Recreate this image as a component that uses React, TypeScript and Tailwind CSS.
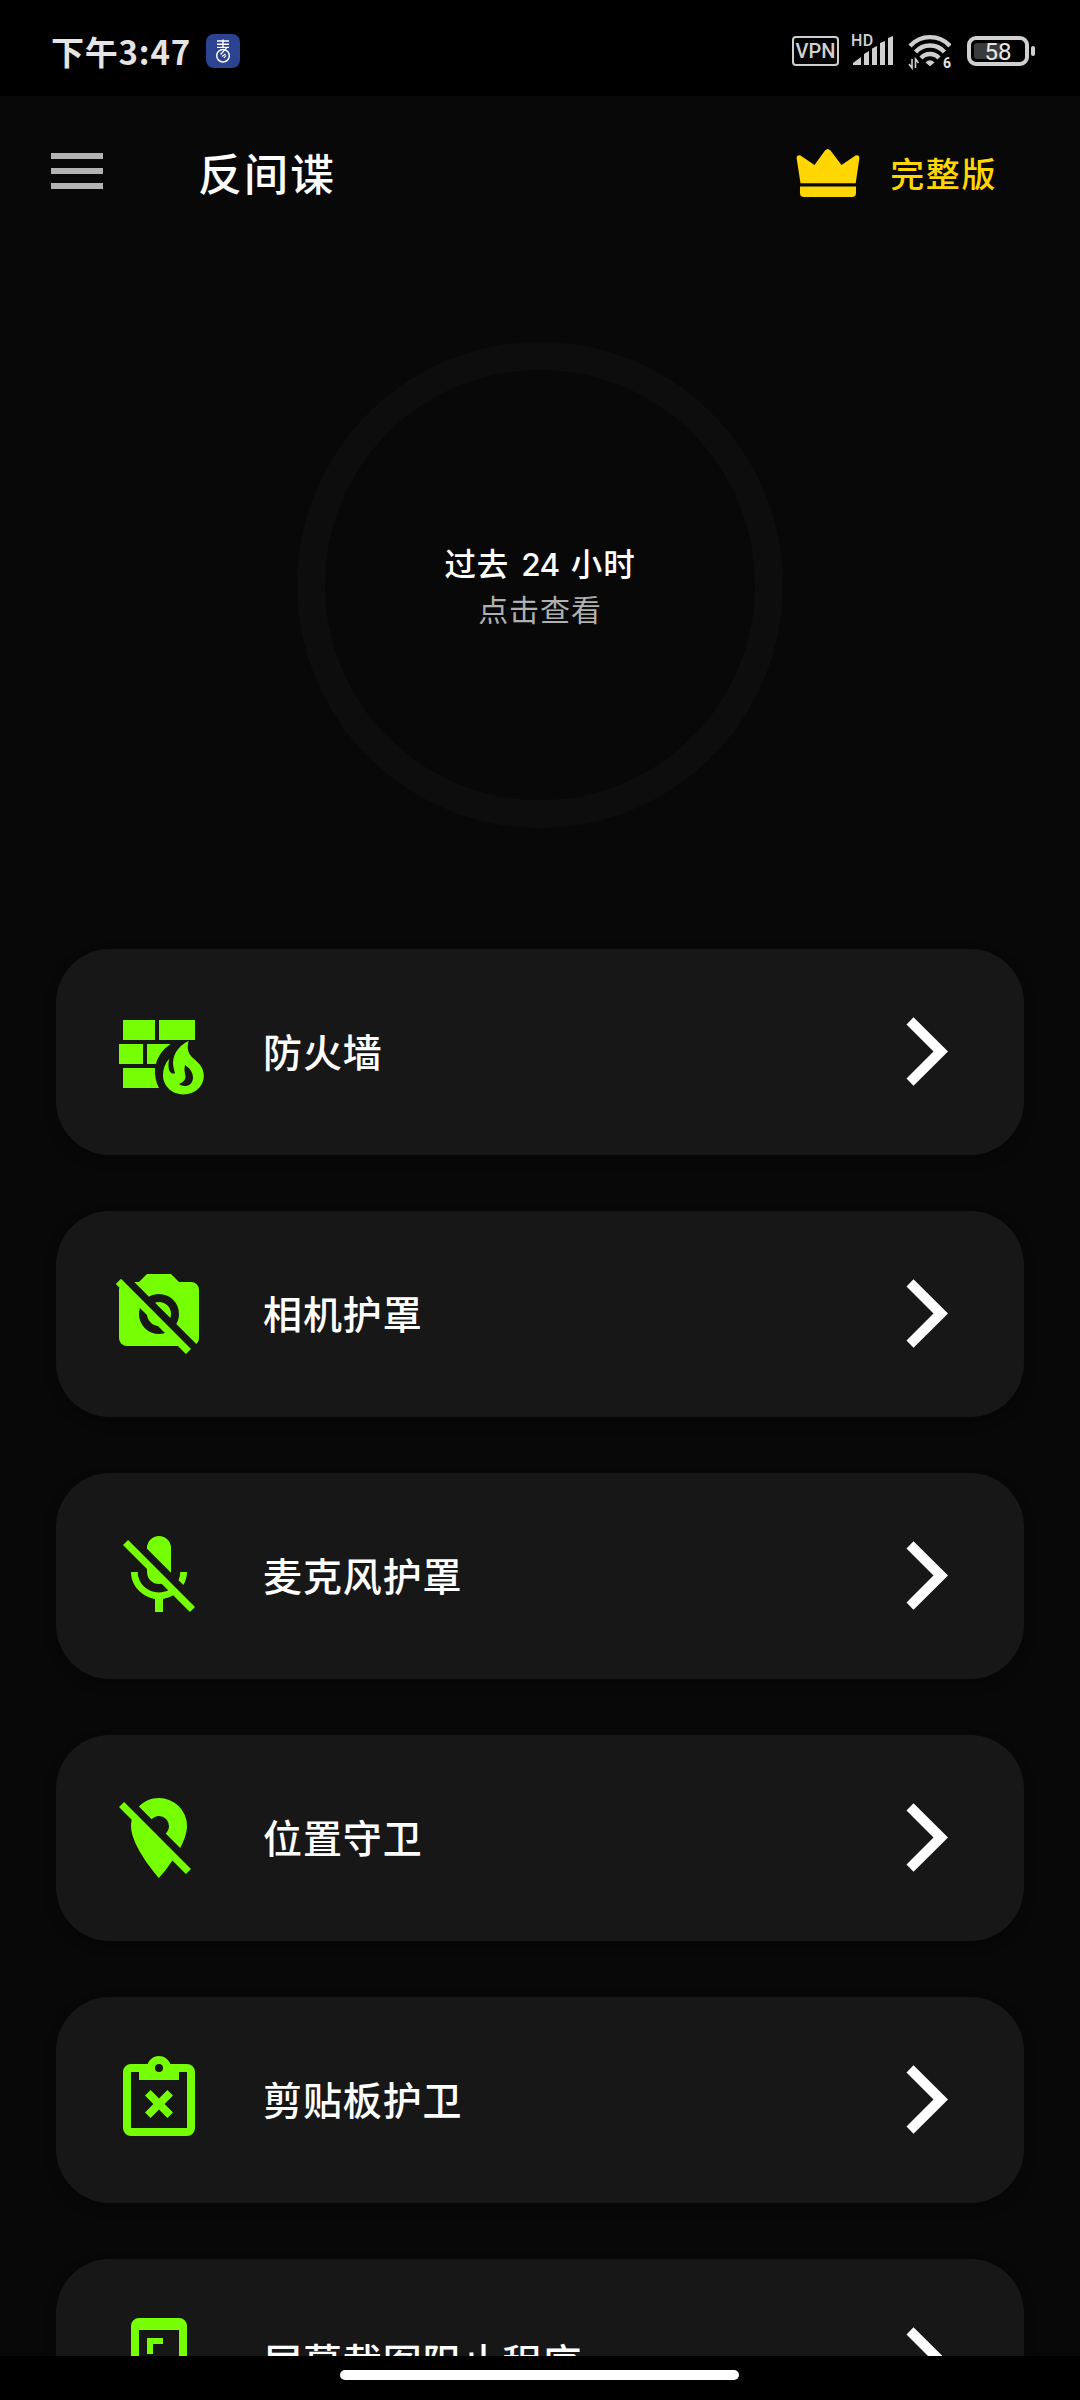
import type { ReactNode } from "react";

type Guard = {
  label: string;
  icon: ReactNode;
};

const guards: Guard[] = [
  {
    label: "防火墙",
    icon: (
      <>
        <path d="M3,4H11V9H3ZM12,4H21V9H12ZM2,10H8V15H2ZM9,10H14.9C13.1,11.2 11.7,13 11.25,15H9ZM3,16H11C10.9,17.8 11.2,19.6 12,21H3Z" />
        <path
          fillRule="evenodd"
          d="M19.42,9.25C17.6,10 15.6,12 15.5,14.6C15.5,15.6 15.8,16.5 16,17.3C15.2,17.6 14.5,17 14.4,15.8C14.35,15 14.4,14.2 14.6,13.6C13.5,14.8 13,16.2 13,17.8C13,20.5 15.3,22.6 18.1,22.6C21,22.6 23.2,20.5 23.2,18C23.2,16 22.1,14.8 20.6,13.6C19.2,12.4 18.9,11 19.42,9.25ZM18.5,15.25C19.6,16 20.5,17 20.5,18.4C20.5,19.6 19.7,20.5 18.7,20.5C18,20.5 17.5,20.4 17,20C18.2,19.6 18.7,18.8 18.6,18C18.5,17.2 18.2,16.4 18.5,15.25Z"
        />
      </>
    ),
  },
  {
    label: "相机护罩",
    icon: (
      <path d="M1.2,4.47L2.5,3.2L20,20.72L18.73,22L16.73,20H4A2,2 0 0,1 2,18V6C2,5.78 2.04,5.57 2.1,5.37L1.2,4.47M7,4L9,2H15L17,4H20A2,2 0 0,1 22,6V18C22,18.6 21.74,19.13 21.32,19.5L16.33,14.5C16.76,13.77 17,12.91 17,12A5,5 0 0,0 12,7C11.09,7 10.23,7.24 9.5,7.67L5.82,4H7M7,12A5,5 0 0,0 12,17C12.5,17 13.03,16.92 13.5,16.77L11.72,15C10.29,14.85 9.15,13.71 9,12.28L7.23,10.5C7.08,10.97 7,11.5 7,12M12,9A3,3 0 0,1 15,12C15,12.35 14.94,12.69 14.83,13L11,9.17C11.31,9.06 11.65,9 12,9Z" />
    ),
  },
  {
    label: "麦克风护罩",
    icon: (
      <path d="M19,11C19,12.19 18.66,13.3 18.1,14.28L16.87,13.05C17.14,12.43 17.3,11.74 17.3,11H19M15,11.16L9,5.18V5A3,3 0 0,1 12,2A3,3 0 0,1 15,5V11L15,11.16M4.27,3L21,19.73L19.73,21L15.54,16.81C14.77,17.27 13.91,17.58 13,17.72V21H11V17.72C7.72,17.23 5,14.41 5,11H6.7C6.7,14 9.24,16.1 12,16.1C12.81,16.1 13.6,15.91 14.31,15.58L12.65,13.92L12,14A3,3 0 0,1 9,11V10.28L3,4.27L4.27,3Z" />
    ),
  },
  {
    label: "位置守卫",
    icon: (
      <path d="M16.37,16.1L11.75,11.47L11.64,11.36L3.27,3L2,4.27L5.18,7.45C5.06,7.95 5,8.46 5,9C5,14.25 12,22 12,22C12,22 13.67,20.15 15.37,17.65L18.73,21L20,19.72M12,6.5A2.5,2.5 0 0,1 14.5,9C14.5,9.73 14.17,10.39 13.67,10.85L17.3,14.5C18.28,12.62 19,10.68 19,9A7,7 0 0,0 12,2C10,2 8.24,2.82 6.96,4.14L10.15,7.33C10.61,6.82 11.26,6.5 12,6.5Z" />
    ),
  },
  {
    label: "剪贴板护卫",
    icon: (
      <>
        <path
          fillRule="evenodd"
          d="M19,3H14.82C14.4,1.84 13.3,1 12,1S9.6,1.84 9.18,3H5A2,2 0 0,0 3,5V19A2,2 0 0,0 5,21H19A2,2 0 0,0 21,19V5A2,2 0 0,0 19,3M12,3A1,1 0 0,1 13,4A1,1 0 0,1 12,5A1,1 0 0,1 11,4A1,1 0 0,1 12,3M7,7H17V5H19V19H5V5H7V7Z"
        />
        <path d="M8.5,10.9L9.9,9.5L12,11.6L14.1,9.5L15.5,10.9L13.4,13L15.5,15.1L14.1,16.5L12,14.4L9.9,16.5L8.5,15.1L10.6,13Z" />
      </>
    ),
  },
  {
    label: "屏幕截图阻止程序",
    icon: (
      <path
        fillRule="evenodd"
        d="M17,1H7A2,2 0 0,0 5,3V21A2,2 0 0,0 7,23H17A2,2 0 0,0 19,21V3A2,2 0 0,0 17,1M17,20H7V4H17V20M9,6H13V7.5H10.5V10H9V6M15,18H11V16.5H13.5V14H15V18Z"
      />
    ),
  },
];

function StatusBar() {
  return (
    <div className="flex h-24 shrink-0 items-start justify-between bg-black pl-[51px] pr-[45px] text-[#e4e4e4]">
      <div className="flex items-center pt-[34px]">
        <span className="w-[155px] whitespace-nowrap text-[33px] font-bold leading-[32px] tracking-[0.8px]">
          下午3:47
        </span>
        {/* App de notificação */}
        <svg className="h-[34px] w-[34px]" viewBox="0 0 34 34" fill="none">
          <rect width="34" height="34" rx="8" fill="#2c4391" />
          <path d="M11 7h12M11 10.200h12M11 13.400h12M17 5.500V13.400" stroke="#fff" strokeWidth="1.4" />
          <circle cx="17" cy="21.700" r="6.300" stroke="#fff" strokeWidth="1.500" />
          <path d="M14.500 20.500L20.500 14M16 22.500L19.500 20M18 24l2-2.500" stroke="#fff" strokeWidth="1.200" />
        </svg>
      </div>

      <div className="flex pt-[34px]">
        <div className="mt-[2px] flex h-[30px] w-[47px] items-center justify-center rounded-[4px] border-2 border-[#cfcfcf] font-['Roboto'] text-[20px] font-medium leading-none text-[#d0d0d0]">
          VPN
        </div>

        {/* Sinal */}
        <div className="relative ml-[12px] h-[36px] w-[44px]">
          <svg className="h-[36px] w-[44px]" viewBox="0 0 44 36" fill="#d0d0d0">
            <path d="M2 31V29L10 23V31ZM13 31V20L18 17V31ZM21 31V14.500L26 12V31ZM29 31V9L34 7V31ZM37 31V4L42 2V31Z" />
          </svg>
          <span className="absolute left-0 top-[-3px] font-['Roboto'] text-[16px] font-medium leading-[20px] tracking-[0.5px] text-[#d0d0d0]">
            HD
          </span>
        </div>

        {/* Wi-Fi 6 */}
        <div className="relative ml-[12px] h-[36px] w-[44px]">
          <svg className="h-[36px] w-[44px]" viewBox="0 0 44 36" fill="none">
            <g stroke="#d0d0d0" strokeWidth="4.400">
              <path d="M3 12A27 27 0 0 1 43 12" />
              <path d="M8.500 18A19.500 19.500 0 0 1 37.500 18" />
              <path d="M14 24A12 12 0 0 1 32 24" />
            </g>
            <path d="M18.500 28.500Q23 24 27.500 28.500L23 32.200Z" fill="#d0d0d0" />
            <path d="M5 25v9L2 30M8.500 34v-9l3 4" stroke="#d0d0d0" strokeWidth="1.600" />
          </svg>
          <span className="absolute left-[36px] top-[21px] font-['Roboto'] text-[14px] font-bold leading-[17px] text-[#e4e4e4]">
            6
          </span>
        </div>

        {/* Bateria */}
        <div className="ml-[16px] mt-[2px] flex h-[30px] items-center">
          <div className="relative flex h-[30px] w-[62px] items-center justify-center rounded-[9px] border-4 border-[#d0d0d0]">
            <div className="absolute left-[3px] top-[3px] h-4 w-[28px] rounded-[3px] bg-[#3b3b3b]" />
            <span className="relative mt-px font-['Roboto'] text-[24px] leading-none text-[#e8e8e8]">58</span>
          </div>
          <div className="ml-[2px] h-[10px] w-[4px] rounded-[2px] bg-[#d0d0d0]" />
        </div>
      </div>
    </div>
  );
}

function Header() {
  return (
    <header className="flex h-[152px] shrink-0 items-center pl-[51px] pr-[83px]">
      <button className="mt-[-3px] flex w-[52px] flex-col gap-[9px]" aria-label="menu">
        <span className="h-[6px] bg-[#b3b3b3]" />
        <span className="h-[6px] bg-[#b3b3b3]" />
        <span className="h-[6px] bg-[#b3b3b3]" />
      </button>
      <h1 className="ml-[95px] text-[44px] font-medium leading-none tracking-[2px]">反间谍</h1>

      <div className="ml-auto flex items-center text-[#ffd600]">
        <svg className="mt-[2px] h-[50px] w-[64px]" viewBox="0 0 64 50" fill="currentColor">
          <path d="M4.500 35.200L0.600 10Q0.800 6.500 4.500 7.500L18.500 17L29 2.500Q31.800 -0.600 34.500 2.500L45.500 17L59.500 7.500Q63.300 6.500 63.400 10L59.700 35.200Z" />
          <path d="M4 38.500H60V45Q60 49 56 49H8Q4 49 4 45Z" />
        </svg>
        <span className="ml-[30px] mt-px text-[34px] font-medium leading-none tracking-[1.6px]">完整版</span>
      </div>
    </header>
  );
}

function GuardCard({ label, icon }: Guard) {
  return (
    <button className="flex h-[206px] w-full shrink-0 items-center rounded-[54px] bg-[#171717] pl-[55px] pr-[76px] shadow-[0_5px_12px_rgba(0,0,0,0.3)]">
      <svg className="h-24 w-24" viewBox="0 0 24 24" fill="#76ff03">
        {icon}
      </svg>
      <span className="ml-[56px] mt-[-5px] whitespace-nowrap text-[39px] font-medium leading-[60px] tracking-[0.9px]">
        {label}
      </span>
      <svg className="ml-auto mt-[-2px] h-[69px] w-[42px]" viewBox="0 0 42 69" fill="#fff">
        <path d="M0.500 7.500L7.500 0.200L42 34.500L7.500 68.800L0.500 61.500L27.500 34.500Z" />
      </svg>
    </button>
  );
}

export default function App() {
  return (
    <div className="flex h-[2400px] w-[1080px] flex-col overflow-hidden bg-[#080808] font-['Noto_Sans_CJK_SC',sans-serif] text-white">
      <StatusBar />
      <Header />

      <main className="flex min-h-0 flex-1 flex-col overflow-hidden px-14">
        {/* Últimas 24 horas */}
        <div className="mt-[94px] flex h-[486px] w-[486px] shrink-0 flex-col items-center justify-center self-center rounded-full border-[28px] border-[#0d0d0d]">
          <p className="mt-px text-[31.5px] font-medium leading-[42px] tracking-[0.9px]">
            过去<span className="ml-[12px] mr-[11px] font-['Inter'] font-medium tracking-[-0.5px]">24</span>小时
          </p>
          <p className="text-[30px] leading-[44px] tracking-[0.9px] text-[#b0b0b0]">点击查看</p>
        </div>

        <div className="mt-[121px] flex flex-col gap-14">
          {guards.map((guard) => (
            <GuardCard key={guard.label} {...guard} />
          ))}
        </div>
      </main>

      {/* Barra de gestos */}
      <div className="flex h-[44px] shrink-0 justify-center bg-black pt-[14px]">
        <div className="mr-px h-[10px] w-[399px] rounded-full bg-white" />
      </div>
    </div>
  );
}
